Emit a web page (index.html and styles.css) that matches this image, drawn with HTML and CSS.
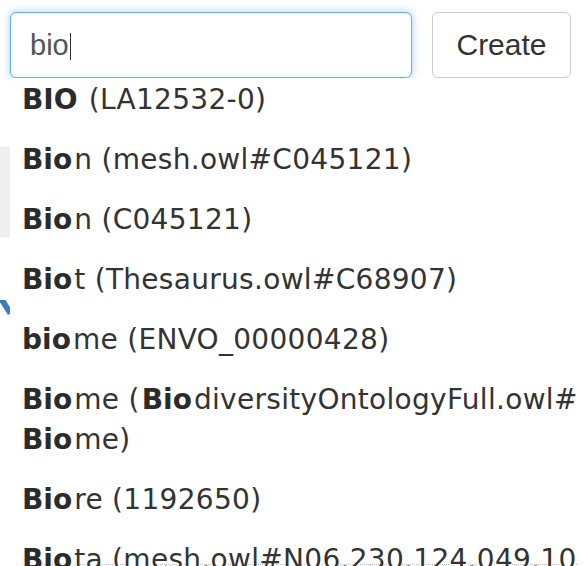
FILE: index.html
```html
<!DOCTYPE html>
<html>
<head>
<meta charset="utf-8">
<link rel="stylesheet" href="styles.css">
</head>
<body>
<div class="page">
  <div class="search-row">
    <div class="search-box">
      <div class="search-input">bio<span class="caret"></span></div>
      <ul class="suggestions">
        <li><strong>BIO</strong> (LA12532-0)</li>
        <li><strong>Bio</strong>n (mesh.owl#C045121)</li>
        <li><strong>Bio</strong>n (C045121)</li>
        <li><strong>Bio</strong>t (Thesaurus.owl#C68907)</li>
        <li><strong>bio</strong>me (ENVO_00000428)</li>
        <li><strong>Bio</strong>me (<strong>Bio</strong>diversityOntologyFull.owl#<br><strong>Bio</strong>me)</li>
        <li><strong>Bio</strong>re (1192650)</li>
        <li class="last"><strong>Bio</strong>ta (mesh.owl#N06.230.124.049.10)</li>
      </ul>
    </div>
    <button class="create-btn" type="button">Create</button>
  </div>
  <div class="content">
    <div class="panel"></div>
    <svg class="edit-icon" width="12" height="18" viewBox="0 0 12 18">
      <path d="M-2 -1 L3 -4 L13 12 L8 15 Z" fill="#3a7ebf"/>
    </svg>
  </div>
</div>
</body>
</html>
```
FILE: styles.css
```css
html, body {
  margin: 0;
  padding: 0;
  overflow: hidden;
  background: #fff;
  width: 588px;
  height: 566px;
}

.page {
  padding: 12px 17px 0 10px;
}

.search-row {
  display: flex;
  gap: 20px;
  align-items: flex-start;
}

.search-box {
  position: relative;
  width: 402px;
  z-index: 2;
}

.search-input {
  box-sizing: border-box;
  height: 66px;
  border: 1px solid #66afe9;
  border-radius: 6px;
  box-shadow: inset 0 1px 1px rgba(0,0,0,.075), 0 0 8px rgba(102,175,233,.6);
  padding: 0 19px;
  display: flex;
  align-items: center;
  font-family: "Liberation Sans", Arial, sans-serif;
  font-size: 29px;
  color: #555;
  background: #fff;
}

.caret {
  display: inline-block;
  width: 0;
  height: 27px;
  border-left: 1.5px solid #333;
  margin-left: 1px;
  margin-top: 2px;
}

.create-btn {
  box-sizing: border-box;
  width: 139px;
  height: 66px;
  border: 1px solid #ccc;
  border-radius: 6px;
  background: #fff;
  font-family: "Liberation Sans", Arial, sans-serif;
  font-size: 30px;
  color: #333;
  padding: 0;
}

.suggestions {
  position: absolute;
  top: 66px;
  left: 0;
  box-sizing: border-box;
  width: 568px;
  height: 500px;
  overflow: hidden;
  margin: 0;
  padding: 2px 0 0 10px;
  list-style: none;
  background: #fff;
  font-family: "DejaVu Sans", Verdana, sans-serif;
  font-size: 28px;
  line-height: 40px;
  letter-spacing: 0.3px;
  color: #333;
}

.suggestions li {
  white-space: nowrap;
  margin-bottom: 20px;
}

.suggestions strong {
  font-weight: bold;
  margin: 0 2px;
  letter-spacing: 0;
  color: #2b2b2b;
}

.suggestions .last {
  text-decoration: underline dotted #bbb;
  text-decoration-thickness: 1px;
  text-underline-offset: -5px;
}

.content {
  position: relative;
  z-index: 1;
}

.panel {
  margin-top: 69px;
  margin-left: -10px;
  width: 300px;
  height: 90px;
  background: #eee;
}

.edit-icon {
  display: block;
  margin-top: 63px;
  margin-left: -10px;
}
```
